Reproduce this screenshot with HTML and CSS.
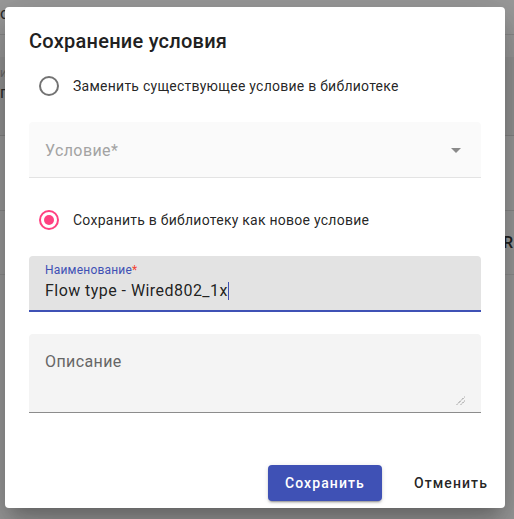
FILE: index.html
```html
<!DOCTYPE html>
<html lang="ru">
<head>
<meta charset="utf-8">
<title>Сохранение условия</title>
<link rel="stylesheet" href="styles.css">
</head>
<body>
<div class="page">
  <div class="page-top"><span class="ghost">о</span></div>
  <div class="page-band"><span class="ghost small">и</span><span class="ghost">г</span></div>
  <div class="page-mid"></div>
  <div class="page-row"><span class="ghost-right">R</span></div>
  <div class="page-rest"></div>
</div>
<div class="dialog">
  <h2 class="title">Сохранение условия</h2>
  <label class="radio">
    <span class="radio-circle"></span>
    <span class="radio-label">Заменить существующее условие в библиотеке</span>
  </label>
  <div class="field select">
    <span class="placeholder">Условие*</span>
    <span class="arrow"></span>
  </div>
  <label class="radio checked">
    <span class="radio-circle"><span class="radio-dot"></span></span>
    <span class="radio-label">Сохранить в библиотеку как новое условие</span>
  </label>
  <div class="field input">
    <span class="float-label">Наименование<span class="req">*</span></span>
    <span class="value">Flow type - Wired802_1x<span class="caret"></span></span>
  </div>
  <div class="field textarea">
    <span class="placeholder dark">Описание</span>
    <svg class="resize" width="9" height="9" viewBox="0 0 9 9"><path d="M1 8.5 L8.5 1 M5 8.5 L8.5 5" stroke="#555" stroke-width="1" stroke-dasharray="1 1" fill="none"/></svg>
  </div>
  <div class="actions">
    <button class="btn primary">Сохранить</button>
    <button class="btn flat">Отменить</button>
  </div>
</div>
</body>
</html>
```

FILE: styles.css
```css
* { box-sizing: border-box; }
html, body { margin: 0; padding: 0; }
body {
  width: 514px;
  height: 519px;
  overflow: hidden;
  background: #9b9b9b;
  font-family: Roboto, "Noto Sans", sans-serif;
  position: relative;
}
.page { width: 514px; height: 519px; display: flex; flex-direction: column; }
.page-top { height: 35px; border-bottom: 1px solid #8a8a8a; padding: 4px 0 0 0; }
.page-band { height: 79px; margin-top: 22px; background: #959595; border-bottom: 1px solid #858585; display: flex; flex-direction: column; padding-top: 6px; }
.page-mid { height: 75px; border-bottom: 1px solid #8a8a8a; }
.page-row { height: 64px; border-bottom: 1px solid #8e8e8e; display: flex; justify-content: flex-end; align-items: center; padding-right: 1px; }
.page-rest { flex: 1; }
.ghost { font-size: 16px; color: #2a2a2a; line-height: 20px; }
.ghost.small { font-size: 12px; color: #6a6a6a; }
.ghost-right { font-size: 16px; color: #202020; font-weight: 500; }

.dialog {
  position: absolute;
  left: 5px;
  top: 7px;
  width: 500px;
  height: 501px;
  background: #fff;
  border-radius: 4px;
  padding: 18px 24px 7px 24px;
  display: flex;
  flex-direction: column;
  box-shadow: 0 11px 15px -7px rgba(0,0,0,.2), 0 24px 38px 3px rgba(0,0,0,.14), 0 9px 46px 8px rgba(0,0,0,.12);
}
.title {
  margin: 0;
  font-size: 20px;
  line-height: 32px;
  font-weight: 500;
  color: #212121;
  letter-spacing: 0.25px;
}
.radio {
  height: 40px;
  display: flex;
  align-items: center;
  margin-top: 9px;
  padding-left: 10px;
}
.radio.checked { margin-top: 22px; }
.radio-circle {
  width: 20px;
  height: 20px;
  border-radius: 50%;
  border: 2px solid #737373;
  display: flex;
  align-items: center;
  justify-content: center;
  flex: none;
}
.radio.checked .radio-circle { border-color: #ff4081; }
.radio-dot { width: 10px; height: 10px; border-radius: 50%; background: #ff4081; }
.radio-label {
  margin-left: 14px;
  font-size: 14px;
  color: rgba(0,0,0,.87);
  line-height: 20px;
  letter-spacing: 0.25px;
}
.field {
  border-radius: 4px 4px 0 0;
  padding: 0 16px;
  position: relative;
}
.select {
  margin-top: 16px;
  height: 56px;
  background: #fafafa;
  border-bottom: 1px solid #e3e3e3;
  display: flex;
  align-items: center;
  justify-content: space-between;
  padding-top: 2px;
}
.placeholder { font-size: 16px; line-height: 20px; color: #a3a3a3; letter-spacing: 0.4px; }
.placeholder.dark { color: #666; }
.arrow {
  width: 0;
  height: 0;
  border-left: 5px solid transparent;
  border-right: 5px solid transparent;
  border-top: 5px solid #8a8a8a;
  margin-right: 4px;
}
.input {
  margin-top: 16px;
  height: 56px;
  background: #e3e3e3;
  border-bottom: 2px solid #3f51b5;
  display: flex;
  flex-direction: column;
  padding-top: 7px;
}
.float-label { font-size: 12px; line-height: 14px; color: #3f51b5; letter-spacing: 0.2px; }
.req { color: #f44336; }
.value { font-size: 16px; line-height: 20px; color: rgba(0,0,0,.87); margin-top: 4px; display: flex; align-items: center; letter-spacing: 0.45px; }
.caret { display: inline-block; width: 1px; height: 18px; background: #3f51b5; margin-left: 0; }
.textarea {
  margin-top: 22px;
  height: 79px;
  background: #f4f4f4;
  border-bottom: 1px solid #8c8c8c;
  padding-top: 18px;
}
.resize { position: absolute; right: 16px; bottom: 7px; }
.actions {
  margin-top: 52px;
  display: flex;
  justify-content: flex-end;
  align-items: center;
  margin-right: -23px;
}
.btn {
  height: 36px;
  border: none;
  border-radius: 4px;
  font-family: Roboto, "Noto Sans", sans-serif;
  font-size: 14px;
  font-weight: 500;
  letter-spacing: 1.1px;
  padding: 0 16px;
  cursor: pointer;
}
.primary {
  width: 114px;
  background: #3f51b5;
  color: #fff;
  box-shadow: 0 3px 1px -2px rgba(0,0,0,.2), 0 2px 2px 0 rgba(0,0,0,.14), 0 1px 5px 0 rgba(0,0,0,.12);
}
.flat {
  background: transparent;
  color: rgba(0,0,0,.87);
  margin-left: 16px;
}
```
